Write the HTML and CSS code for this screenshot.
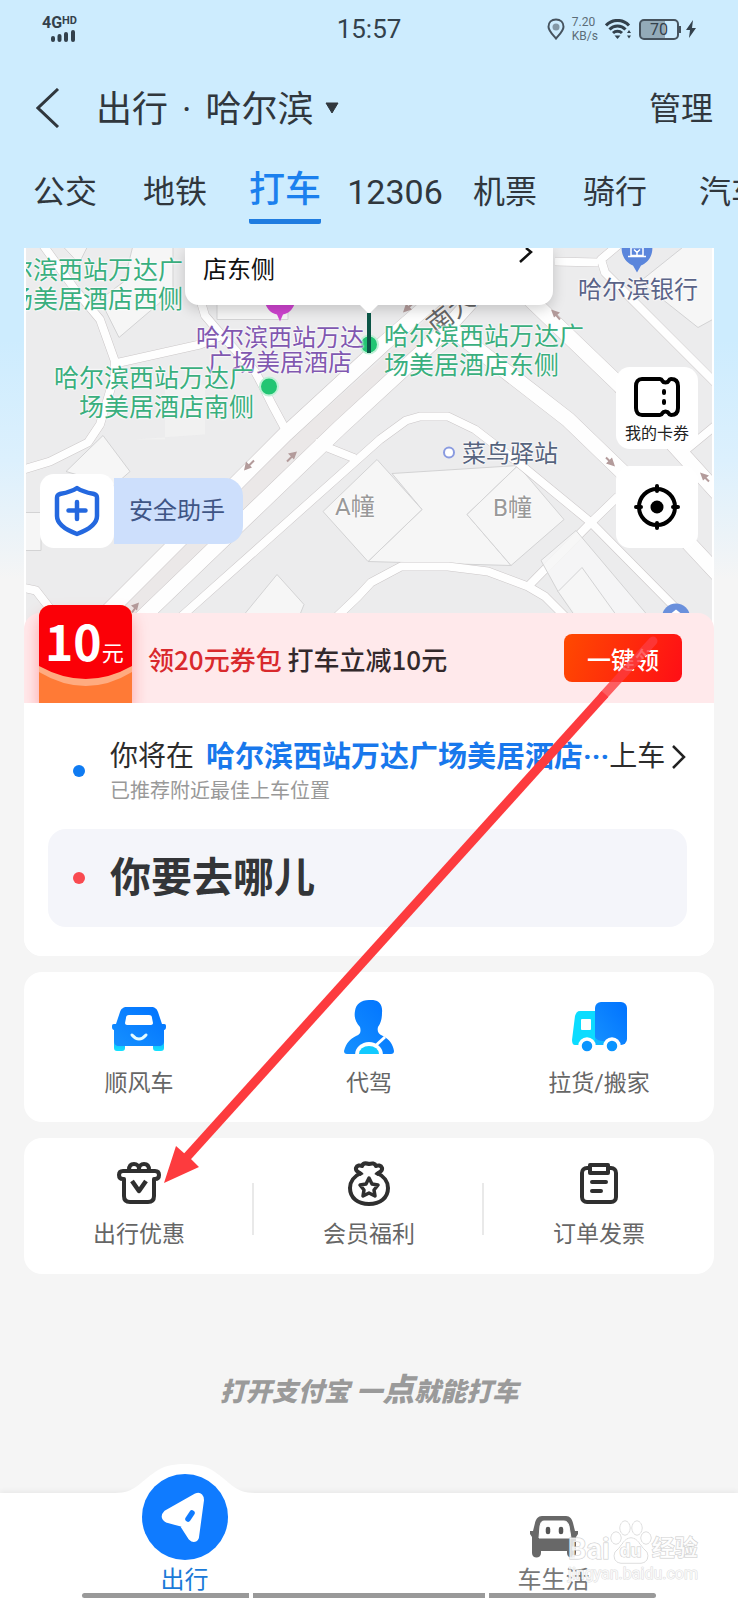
FILE: index.html
```html
<!DOCTYPE html>
<html lang="zh-CN">
<head>
<meta charset="utf-8">
<meta name="viewport" content="width=device-width, initial-scale=1">
<title>出行 · 哈尔滨</title>
<link rel="stylesheet" href="styles.css">
</head>
<body>
<div class="page">
  <div class="status">
    <div class="status-left">
      <div class="net">4G<sup>HD</sup></div>
      <svg class="bars" width="26" height="12" viewBox="0 0 26 12"><g stroke="#33414c" stroke-width="4" stroke-linecap="round"><path d="M3 8v2M9.500 6v4M16 4v6M23 2v8"/></g></svg>
    </div>
    <div class="clock">15:57</div>
    <div class="status-right">
      <svg width="18" height="22" viewBox="0 0 18 22"><path d="M9 1.500c4.500 0 7.500 3 7.500 7.200 0 4-4 7.500-7.500 11.800C5.500 16.200 1.500 12.700 1.500 8.700 1.500 4.500 4.500 1.500 9 1.500z" fill="none" stroke="#46535e" stroke-width="2"/><circle cx="9" cy="9" r="3.500" fill="#8398a6"/></svg>
      <div class="speed">7.20<br>KB/s</div>
      <svg width="27" height="20" viewBox="0 0 27 20"><g fill="none" stroke="#33414c" stroke-width="3"><path d="M1 6.500a15.500 15.500 0 0 1 23 0"/><path d="M4.500 10.500a11 11 0 0 1 16 0"/><path d="M8 14a6.500 6.500 0 0 1 9 0"/></g><path d="M9.500 16.500h6l-3 3.500z" fill="#33414c"/><path d="M22 14l2-3 2 3zM22 16.500l2 3 2-3z" fill="#33414c"/></svg>
      <div class="battery"><span>70</span></div>
      <svg width="10" height="18" viewBox="0 0 10 18"><path d="M7 0L0 10h4l-1 8 7-10H6z" fill="#33414c"/></svg>
    </div>
  </div>

  <header class="header">
    <button class="back" aria-label="返回"><svg width="24" height="40" viewBox="0 0 24 40"><path d="M22 1L2 20l20 19" fill="none" stroke="#30373d" stroke-width="3"/></svg></button>
    <button class="city"><span>出行<i class="sep">·</i>哈尔滨</span><svg width="14" height="12" viewBox="0 0 14 12"><path d="M1 1h12L7 11z" fill="#30373d" stroke="#30373d" stroke-linejoin="round"/></svg></button>
    <a class="manage" href="#">管理</a>
  </header>

  <nav class="tabs">
    <a href="#">公交</a><a href="#">地铁</a><a href="#" class="active">打车</a><a href="#" class="num">12306</a><a href="#">机票</a><a href="#">骑行</a><a href="#">汽车</a>
  </nav>

  <main class="main">
    <section class="ride">
      <div class="map">
        <svg class="map-art" viewBox="26 248 686 376" preserveAspectRatio="xMidYMid slice" aria-hidden="true">
          <rect x="0" y="240" width="740" height="390" fill="#ececed"/>
          <g fill="#f6f6f6" stroke="#d3d3d4">
            <path d="M62 246h26l-9 18zM133 246h40v46l-54 46-19-38 24-18z"/>
            <path d="M217 296h71v24h-71z"/>
            <path d="M103 436l27 36-16 14-48-14zM20 513h21v38H20z"/>
            <path d="M277 575l27 30-8 20h-60z"/>
            <path d="M640 282l50-40h30v74l-22 12z"/>
            <path d="M392 474l126-8-51 49 44 51-143-4 54-52z"/>
            <path d="M377 460l45 50-54 52-45-50z"/>
            <path d="M518 466l46 54-53 46-44-51z"/>
            <path d="M133 440h32v-55h40v50z" stroke="none" opacity=".5"/>
          </g>
          <path d="M128 612L288 455l182-162" stroke="#ebe8e8" stroke-width="18" fill="none"/>
          <g fill="none" stroke="#cbc7c8" stroke-linejoin="round">
            <g stroke-width="9">
              <path d="M42 244l33 46 25 30 15 42v13l-15 50-12 18-38 19-30 9"/>
              <path d="M115 364l85-19 22-9M199 296l6 20 17 20 33 36 7 13 10 20 14 26"/>
              <path d="M178 620L380 440l26-19 14-4h28l27 13 43 33 73 60 85 86"/>
              <path d="M315 443l40 16M528 587l63-64 27-26M684 452l34-28"/>
              <path d="M336 618l22-21 13-14 30-16h47l40 5 40 15 17 10 24 24"/>
              <path d="M555 262l43 1M620 244l-19 16 4 13 110 110"/>
              <path d="M22 588l14 3 14 18"/>
            </g>
            <path d="M100 620L285 435l100-92 60-52M136 624l204-196 100-92 40-44M452 330l116 90 57 55 93 100M520 290l100 96 98 108" stroke-width="16"/>
          </g>
          <g fill="none" stroke="#fefefe" stroke-linejoin="round">
            <g stroke-width="8">
              <path d="M42 244l33 46 25 30 15 42v13l-15 50-12 18-38 19-30 9"/>
              <path d="M115 364l85-19 22-9M199 296l6 20 17 20 33 36 7 13 10 20 14 26"/>
              <path d="M178 620L380 440l26-19 14-4h28l27 13 43 33 73 60 85 86"/>
              <path d="M315 443l40 16M528 587l63-64 27-26M684 452l34-28"/>
              <path d="M336 618l22-21 13-14 30-16h47l40 5 40 15 17 10 24 24"/>
              <path d="M555 262l43 1M620 244l-19 16 4 13 110 110"/>
              <path d="M22 588l14 3 14 18"/>
            </g>
            <path d="M100 620L285 435l100-92 60-52M136 624l204-196 100-92 40-44M452 330l116 90 57 55 93 100M520 290l100 96 98 108" stroke-width="15"/>
          </g>
          <g fill="#f6f6f6" fill-opacity=".9" stroke="#d3d3d4"><path d="M576 531l76 90h-72l-22-29-17-31z"/><path d="M558 592l24-24 36 50h-42z"/></g>
          <g fill="none" stroke="#b39b9b" stroke-width="2"><path d="M254 461l-8 8M287 462l7-7M132 613l5-7M414 303l-8 7M560 320l-6-7M606 458l6 6M709 482l-6-6"/></g>
          <g fill="#b39b9b"><path d="M244 471l2-9 6 6zM297 452l-9 2 6 6zM139 603l-8 3 6 5zM403 313l3-9 6 6zM551 310l9 3-6 5zM615 467l-3-9-6 6zM700 473l9 3-6 5z"/></g>
          <path d="M265 300h30a15 15 0 0 1-12 15l-3 7-3-7a15 15 0 0 1-12-15z" fill="#cf44d0"/>
          <path d="M622 244h30c2 12-4 19-11 22l-4 7-4-7c-7-3-13-10-11-22z" fill="#5b86dc"/>
          <path d="M631 248h12v8h-12zM628 257h18M634 250l3 3 3-3M637 253v4" fill="none" stroke="#fff" stroke-width="1.500"/>
          <circle cx="449" cy="453" r="5" fill="#fff" stroke="#8a9be0" stroke-width="2"/>
          <circle cx="676" cy="618" r="14" fill="#6a90dc"/><path d="M671 614h10l-5-4z" fill="#fff"/>
          <circle cx="269" cy="387" r="9" fill="#22c573" stroke="#bff0d6" stroke-width="2"/>
          <circle cx="369" cy="345" r="9" fill="#22c573" stroke="#bff0d6" stroke-width="2"/>
        </svg>
        <p class="poi road">南大</p>
        <p class="poi hotel">哈尔滨西站万达<br>广场美居酒店</p>
        <p class="poi stop west">哈尔滨西站万达广<br>场美居酒店西侧</p>
        <p class="poi stop south">哈尔滨西站万达广<br>场美居酒店南侧</p>
        <p class="poi stop east">哈尔滨西站万达广<br>场美居酒店东侧</p>
        <p class="poi bank">哈尔滨银行</p>
        <p class="poi depot">菜鸟驿站</p>
        <p class="poi block-a">A幢</p>
        <p class="poi block-b">B幢</p>
        <div class="callout">店东侧
          <svg class="callout-go" width="16" height="18" viewBox="0 0 16 18"><path d="M8 0l5 4L2 14" fill="none" stroke="#111" stroke-width="2.500"/></svg>
          <svg class="callout-tip" width="30" height="50" viewBox="0 0 30 50"><path d="M5 0h20L15 10z" fill="#fff"/><path d="M15 9v40" stroke="#0b5546" stroke-width="4"/></svg>
        </div>
        <button class="tool cards"><svg width="48" height="42" viewBox="0 0 48 42"><path d="M9 3h18c1 0 2 1 2.500 2 1 2 5 2 6 0 .5-1 1.500-2 2.500-2 5 0 7 3 7 7v22c0 4-2 7-7 7-1 0-2-1-2.500-2-1-2-5-2-6 0-.5 1-1.500 2-2.500 2H9c-4 0-6-3-6-7V10c0-4 2-7 6-7z" fill="none" stroke="#000" stroke-width="4"/><path d="M31 15v2M31 25v2" stroke="#000" stroke-width="4" stroke-linecap="round"/></svg><span>我的卡券</span></button>
        <button class="tool locate" aria-label="定位"><svg width="48" height="48" viewBox="0 0 48 48"><circle cx="24" cy="24" r="18" fill="none" stroke="#000" stroke-width="4"/><circle cx="24" cy="24" r="6.500"/><path d="M24 3v5M24 40v5M3 24h5M40 24h5" stroke="#000" stroke-width="4" stroke-linecap="round"/></svg></button>
        <button class="safety"><span class="shield"><svg width="46" height="52" viewBox="0 0 46 52"><path d="M23 3c6 4 12 5 17 6 3 1 3 2 3 4v18c0 9-12 15-20 18C15 46 3 40 3 31V13c0-2 0-3 3-4 5-1 11-2 17-6z" fill="none" stroke="#2468df" stroke-width="4.500" stroke-linejoin="round"/><path d="M23 17v17M14.500 25.500h17" stroke="#2468df" stroke-width="4.500" stroke-linecap="round"/></svg></span><span class="safety-text">安全助手</span></button>
      </div>

      <div class="promo">
        <div class="coupon">
          <svg class="coupon-art" viewBox="0 0 93 98" preserveAspectRatio="none" aria-hidden="true"><rect width="93" height="98" fill="#ff7a36"/><path d="M0 0h93v67q-46 28-93 0z" fill="#ffab80"/><path d="M0 0h93v61q-46 26-93 0z" fill="#fb0007"/></svg>
          <b>10</b><span>元</span>
        </div>
        <p class="promo-text"><em>领20元券包</em> 打车立减10元</p>
        <button class="claim">一键领</button>
      </div>

      <div class="trip">
        <button class="pickup">
          <i class="dot blue"></i>
          <span class="pickup-body">
            <span class="pickup-line">你将在<b>哈尔滨西站万达广场美居酒店···</b>上车<svg width="16" height="26" viewBox="0 0 16 26"><path d="M2 2l11 11L2 24" fill="none" stroke="#222" stroke-width="2.500"/></svg></span>
            <span class="pickup-note">已推荐附近最佳上车位置</span>
          </span>
        </button>
        <button class="dest"><i class="dot red"></i>你要去哪儿</button>
      </div>
    </section>

    <section class="trio services">
      <a href="#"><svg width="56" height="56" viewBox="0 0 56 56"><defs><linearGradient id="g1" x1="0" y1="1" x2="1" y2="0"><stop offset="0" stop-color="#1691ff"/><stop offset="1" stop-color="#0072ff"/></linearGradient><linearGradient id="g2" x1="0" y1="0" x2="0" y2="1"><stop offset="0" stop-color="#1590ff"/><stop offset="1" stop-color="#12e3ff"/></linearGradient></defs><path d="M3 34h50v14c0 2-1 3-3 3h-5c-2 0-3-1-3-3v-3H14v3c0 2-1 3-3 3H6c-2 0-3-1-3-3z" fill="url(#g2)"/><path d="M16 7h24c4 0 6 2 7 5l4 12h2c2 0 2 1 2 3s-1 3-2 3v11c0 3-2 5-5 5H8c-3 0-5-2-5-5V30c-1 0-2-1-2-3s0-3 2-3h2l4-12c1-3 3-5 7-5z" fill="url(#g1)"/><path d="M18 15h20c2 0 3 1 3 3l1 5c0 1-1 2-2 2H16c-1 0-2-1-2-2l1-5c0-2 1-3 3-3z" fill="#fff"/><path d="M21 35q7 8 14 0" fill="none" stroke="#e4fbff" stroke-width="3" stroke-linecap="round"/></svg>顺风车</a>
      <a href="#"><svg width="56" height="56" viewBox="0 0 56 56"><path d="M28 0c9-1 14 4 13 13 0 5-1 10-4 14-1 4 0 7 5 9 6 3 10 8 11 15 0 2-1 3-3 3H6c-2 0-3-1-3-3 2-8 6-12 12-15 5-2 5-5 4-9-5-5-6-11-5-16 1-7 6-11 14-11z" fill="url(#g1)"/><path d="M44 37L32 48" stroke="#fff" stroke-width="3"/><path d="M14 55a13 12 0 0 1 28 0z" fill="#fff"/><path d="M18 54a10 8 0 0 1 20 0z" fill="#12caff"/></svg>代驾</a>
      <a href="#"><svg width="58" height="56" viewBox="0 0 58 56"><path d="M10 11h22v34H5c-2 0-3-2-3-5l3-24c1-3 2-5 5-5z" fill="#0cdcff"/><rect x="25" y="2" width="32" height="43" rx="6" fill="url(#g1)"/><path d="M25 37q2 4 8 4h6v4H25z" fill="#12b8ff"/><rect x="11" y="19" width="10" height="11" rx="1" fill="#fff"/><g fill="#0b95ff" stroke="#fff" stroke-width="3.500"><circle cx="17" cy="46" r="7"/><circle cx="42" cy="46" r="7"/></g></svg>拉货/搬家</a>
    </section>

    <section class="trio perks">
      <a href="#"><svg width="46" height="46" viewBox="0 0 46 46"><g fill="none" stroke="#2f2f2f" stroke-width="4" stroke-linejoin="round"><path d="M8 18h-1c-3 0-4-2-4-4s1-4 4-4h32c3 0 4 2 4 4s-1 4-4 4h-1v17c0 4-2 6-6 6H14c-4 0-6-2-6-6z"/><path d="M13 9c0-4 2-6 5-6s5 2 5 5c0-3 2-5 5-5s5 2 5 6"/><path d="M16 20l7 10 7-10" stroke-width="4.500"/></g></svg>出行优惠</a>
      <a href="#"><svg width="46" height="46" viewBox="0 0 46 46"><g fill="none" stroke="#2f2f2f" stroke-width="4" stroke-linejoin="round"><path d="M15 12C8 15 4 21 4 27c0 10 8 16 19 16s19-6 19-16c0-6-4-12-11-15"/><path d="M16 14c-2-3-7-3-6-7 1-3 4-3 6-2 1-3 4-3 7-2 3-1 6-1 7 2 2-1 5-1 6 2 1 4-4 4-6 7"/><path d="M23 17l3 6 6 1-4 5 1 6-6-3-6 3 1-6-4-5 6-1z" stroke-width="3.500"/></g></svg>会员福利</a>
      <a href="#"><svg width="46" height="46" viewBox="0 0 46 46"><g fill="none" stroke="#2f2f2f" stroke-width="4" stroke-linejoin="round" stroke-linecap="round"><path d="M14 7h-3c-3 0-5 2-5 5v24c0 3 2 5 5 5h24c3 0 5-2 5-5V12c0-3-2-5-5-5h-3"/><path d="M14 4h18v8H14zM16 21h14M16 30h9"/></g></svg>订单发票</a>
    </section>
  </main>

  <p class="slogan">打开支付宝 <span>一<big>点</big>就能打车</span></p>

  <nav class="dock">
    <a href="#" class="dock-item current">
      <svg class="bump" width="140" height="36" viewBox="0 0 140 36" aria-hidden="true"><path d="M0 30c20 0 25-11 40-21 8-6 18-8 30-8s22 2 30 8c15 10 20 21 40 21v6H0z" fill="#fff"/></svg>
      <span class="disc"><svg width="48" height="52" viewBox="0 0 48 52"><path d="M6 23L36 6q3-1 3 3l-5 37q-1 2-3 0l-9-14-15-4q-4-2-1-5z" fill="#fff" stroke="#fff" stroke-width="8" stroke-linejoin="round"/><path d="M27 28l4-6" stroke="#0f7bff" stroke-width="5.500" stroke-linecap="round"/></svg></span>
      出行
    </a>
    <a href="#" class="dock-item">
      <svg class="car" width="50" height="44" viewBox="0 0 50 44"><path d="M13 1h24c4 0 6 3 7 7l2 8h3v3l-2 3v16c0 6-9 6-9 0v-2H12v2c0 6-9 6-9 0V22l-2-3v-3h3l2-8c1-4 3-7 7-7z" fill="#686868"/><path d="M15 6h20c3 0 4 2 5 5l2 12H10l1-12c1-3 1-5 4-5z" fill="#fff" stroke="#fff" stroke-linejoin="round"/><path d="M19 14v3M32 14v3" stroke="#555" stroke-width="4.500" stroke-linecap="round"/></svg>
      车生活
    </a>
    <div class="gesture" aria-hidden="true"><i></i><i></i><i></i></div>
    <div class="watermark">
      <div class="wm-brand"><span>Bai</span><span class="paw"><svg width="42" height="46" viewBox="0 0 42 46"><g fill="#fff" fill-opacity=".7" stroke="#ccc"><ellipse cx="6" cy="18" rx="5" ry="6"/><ellipse cx="15" cy="8" rx="5" ry="7"/><ellipse cx="27" cy="8" rx="5" ry="7"/><ellipse cx="36" cy="18" rx="5" ry="6"/><path d="M21 18c7 0 9 8 14 12s3 13-4 13H11c-7 0-9-9-4-13s7-12 14-12z"/></g></svg><b>du</b></span><span>经验</span></div>
      <div class="wm-url">jingyan.baidu.com</div>
    </div>
  </nav>

  <svg class="pointer" width="500" height="550" viewBox="160 636 500 550" aria-hidden="true"><path d="M186 1158L605 694" stroke="#fd3b3e" stroke-width="9"/><path d="M603 696L653 641" stroke="#fd3b3e" stroke-opacity=".8" stroke-width="9" stroke-linecap="round"/><path d="M164 1183l12-37 9 8 5 4 9 9z" fill="#fd3b3e"/></svg>
</div>
</body>
</html>
```
FILE: styles.css
```css
* { box-sizing: border-box; }
body {
  margin: 0;
  font-family: Roboto, "Noto Sans CJK SC", sans-serif;
  color: #30373d;
}
p { margin: 0; }
a { color: inherit; text-decoration: none; }
button {
  border: 0;
  padding: 0;
  background: none;
  color: inherit;
  font: inherit;
  text-align: left;
}
svg { display: block; flex: none; }
i, em { font-style: normal; }

.page {
  position: relative;
  display: flex;
  flex-direction: column;
  min-height: 100vh;
  overflow: hidden;
  background: linear-gradient(#cdecfe 0, #cdecfe 340px, #dcf0fd 460px, #f5f5f5 580px);
}

.status {
  display: grid;
  grid-template-columns: 1fr auto 1fr;
  align-items: center;
  height: 58px;
  padding: 0 42px;
  color: #33414c;
}
.net { font-size: 16px; line-height: 14px; font-weight: 700; white-space: nowrap; }
.net sup { font-size: 11px; line-height: 8px; vertical-align: 4px; }
.bars { margin-left: 8px; }
.clock { font-size: 26px; line-height: 30px; }
.status-right { display: flex; align-items: center; justify-content: flex-end; gap: 7px; }
.speed { font-size: 12px; line-height: 14px; color: #5c6c78; }
.battery {
  position: relative;
  width: 40px;
  height: 21px;
  border: 2px solid #46535e;
  border-radius: 5px;
  background: linear-gradient(90deg, #93abb9 68%, transparent 68%);
  font-size: 16px;
  line-height: 18px;
  text-align: center;
}
.battery::after {
  content: "";
  position: absolute;
  right: -4px;
  top: 5px;
  width: 2px;
  height: 7px;
  background: #46535e;
}

.header {
  display: flex;
  align-items: center;
  height: 100px;
  padding: 0 25px 0 36px;
}
.back { width: 60px; }
.city { display: flex; align-items: center; gap: 12px; font-size: 36px; line-height: 48px; }
.city span { padding-top: 4px; }
.sep { margin: 0 14px; }
.manage { margin-left: auto; padding-top: 2px; font-size: 32px; line-height: 44px; }

.tabs {
  display: grid;
  grid-auto-flow: column;
  grid-auto-columns: 110px;
  height: 90px;
  padding-left: 10px;
  overflow: hidden;
  font-size: 32px;
  line-height: 68px;
  text-align: center;
  white-space: nowrap;
}
.tabs a:last-child { padding-left: 12px; }
.tabs .num { font-size: 34px; }
.tabs .active {
  justify-self: center;
  height: 66px;
  border-bottom: 5px solid #1f7ce0;
  border-radius: 2px;
  color: #1b80ee;
  font-size: 36px;
  line-height: 64px;
  font-weight: 500;
}

.main { display: grid; gap: 16px; padding: 0 24px; }

.ride { overflow: hidden; border-radius: 0 0 18px 18px; background: #fff; }
.map {
  position: relative;
  height: 375px;
  margin: 0 2px -10px;
  overflow: hidden;
}
.map-art { width: 100%; height: 100%; }

.poi {
  position: absolute;
  font-size: 24px;
  line-height: 25px;
  white-space: nowrap;
  text-shadow: 0 0 2px #fff, 0 0 2px #fff, 0 0 3px #fff;
}
.stop { color: #3aaf7e; font-size: 25px; line-height: 29px; }
.west { left: -43px; top: 8px; text-align: right; }
.south { left: 28px; top: 116px; text-align: right; }
.east { left: 358px; top: 74px; }
.hotel { left: 170px; top: 78px; color: #8158b0; text-align: center; }
.bank { left: 552px; top: 30px; color: #5b6488; }
.depot { left: 436px; top: 194px; color: #56647e; }
.block-a { left: 309px; top: 247px; color: #999; }
.block-b { left: 467px; top: 248px; color: #999; }
.road { left: 399px; top: 52px; color: #666; rotate: -38deg; font-size: 26px; }

.callout {
  position: absolute;
  left: 159px;
  top: 0;
  width: 368px;
  height: 57px;
  padding: 4px 18px;
  border-radius: 0 0 14px 14px;
  background: #fff;
  box-shadow: 0 4px 14px rgba(0, 0, 0, .18);
  color: #111;
  font-size: 24px;
  line-height: 36px;
}
.callout-go { position: absolute; right: 19px; top: 0; }
.callout-tip { position: absolute; left: 169px; top: 56px; }

.tool {
  position: absolute;
  right: 14px;
  display: grid;
  place-items: center;
  align-content: center;
  width: 82px;
  height: 82px;
  border-radius: 14px;
  background: #fff;
  color: #222;
  font-size: 16px;
  line-height: 24px;
}
.cards { top: 119px; padding-top: 6px; }
.cards svg { margin-bottom: 4px; }
.locate { top: 218px; }
.safety {
  position: absolute;
  left: 14px;
  top: 226px;
  display: flex;
  align-items: center;
}
.shield {
  display: grid;
  place-items: center;
  width: 74px;
  height: 74px;
  border-radius: 14px;
  background: #fff;
}
.safety-text {
  padding: 0 18px 0 15px;
  border-radius: 0 18px 18px 0;
  background: #cddffc;
  color: #3f5585;
  font-size: 24px;
  line-height: 66px;
}

.promo {
  position: relative;
  display: flex;
  align-items: center;
  height: 90px;
  padding: 0 32px 0 15px;
  border-radius: 16px 16px 0 0;
  background: #ffe9eb;
  font-family: "Noto Sans CJK SC", sans-serif;
}
.coupon {
  position: relative;
  display: flex;
  align-items: baseline;
  align-self: flex-end;
  width: 93px;
  height: 98px;
  padding-left: 6px;
  overflow: hidden;
  border-radius: 12px 12px 0 0;
  color: #fff;
  flex: none;
  box-shadow: 0 10px 16px rgba(255, 60, 60, .4);
}
.coupon-art { position: absolute; inset: 0; width: 100%; height: 100%; }
.coupon b { position: relative; font-size: 48px; line-height: 70px; }
.coupon span { position: relative; font-size: 22px; }
.promo-text {
  margin-left: 16px;
  padding-top: 2px;
  color: #33292b;
  font-size: 26px;
  line-height: 36px;
  font-weight: 500;
  white-space: nowrap;
}
.promo-text em { color: #d9292c; }
.claim {
  width: 118px;
  height: 48px;
  margin-left: auto;
  border-radius: 8px;
  background: linear-gradient(110deg, #ff4a00, #ff0e16);
  color: #fff;
  font-size: 24px;
  font-weight: 500;
  text-align: center;
}

.trip {
  position: relative;
  display: grid;
  gap: 24px;
  padding: 34px 28px 29px 24px;
  background: #fff;
}
.dot { width: 12px; height: 12px; border-radius: 50%; flex: none; }
.blue { background: #0f7bf2; }
.red { background: #f94a50; }
.pickup { display: flex; align-items: center; gap: 25px; padding-left: 25px; }
.pickup-body { display: grid; }
.pickup-line {
  display: flex;
  align-items: center;
  color: #2c2c2c;
  font-size: 28px;
  line-height: 40px;
  white-space: nowrap;
}
.pickup-line b { margin-left: 12px; color: #1878ec; font-size: 29px; }
.pickup-line svg { margin-left: 6px; }
.pickup-note { color: #999; font-size: 20px; line-height: 28px; }
.dest {
  display: flex;
  align-items: center;
  gap: 25px;
  height: 98px;
  padding-left: 25px;
  border-radius: 18px;
  background: #f4f5fa;
  color: #333538;
  font-size: 41px;
  line-height: 56px;
  font-weight: 700;
}

.trio {
  display: grid;
  grid-template-columns: repeat(3, 1fr);
  border-radius: 18px;
  background: #fff;
  color: #666;
  font-size: 23px;
  line-height: 32px;
}
.trio a {
  display: flex;
  flex-direction: column;
  align-items: center;
}
.services a { gap: 12px; padding: 28px 0 22px; }
.perks a { position: relative; gap: 12px; padding: 23px 0; }
.perks a + a::before {
  content: "";
  position: absolute;
  left: -2px;
  top: 45px;
  width: 2px;
  height: 52px;
  background: #e9e9e9;
}

.slogan {
  margin: 94px 0 36px;
  color: #9a9a9a;
  font-size: 26px;
  line-height: 48px;
  font-weight: 900;
  font-style: italic;
  text-align: center;
}
.slogan big { font-size: 32px; line-height: 32px; }

.dock {
  position: relative;
  display: grid;
  grid-template: 107px / 1fr 1fr;
  margin-top: auto;
  background: #fff;
  box-shadow: 0 -2px 5px rgba(0, 0, 0, .05);
}
.dock-item {
  position: relative;
  display: flex;
  flex-direction: column;
  align-items: center;
  justify-content: flex-end;
  min-height: 0;
  padding-bottom: 4px;
  color: #777;
  font-size: 24px;
  line-height: 32px;
}
.current { color: #1b7ad8; }
.bump { position: absolute; top: -30px; left: 50%; translate: -50% 0; }
.disc {
  position: relative;
  display: grid;
  place-items: center;
  width: 86px;
  height: 86px;
  margin-bottom: 4px;
  border-radius: 50%;
  background: #0f7bff;
  flex: none;
}
.car { margin-bottom: 5px; }
.gesture {
  position: absolute;
  left: 82px;
  right: 82px;
  bottom: 2px;
  display: grid;
  grid-template-columns: 167fr 232fr 167fr;
  gap: 4px;
}
.gesture i { height: 5px; background: #999; }
.gesture i:first-child { border-radius: 3px 0 0 3px; }
.gesture i:last-child { border-radius: 0 3px 3px 0; }

.watermark {
  position: absolute;
  right: 40px;
  bottom: 18px;
  color: rgba(255, 255, 255, .8);
  -webkit-text-stroke: 1px #ccc;
  paint-order: stroke fill;
}
.wm-brand { display: flex; align-items: flex-end; font-size: 29px; line-height: 34px; font-weight: 700; }
.wm-brand span:last-child { font-size: 23px; }
.paw { position: relative; }
.paw b { position: absolute; left: 10px; bottom: -2px; font-size: 19px; }
.wm-url { font-size: 16px; line-height: 16px; text-align: right; -webkit-text-stroke: 1px #ddd; }

.pointer { position: absolute; left: 160px; top: 636px; pointer-events: none; }
```
